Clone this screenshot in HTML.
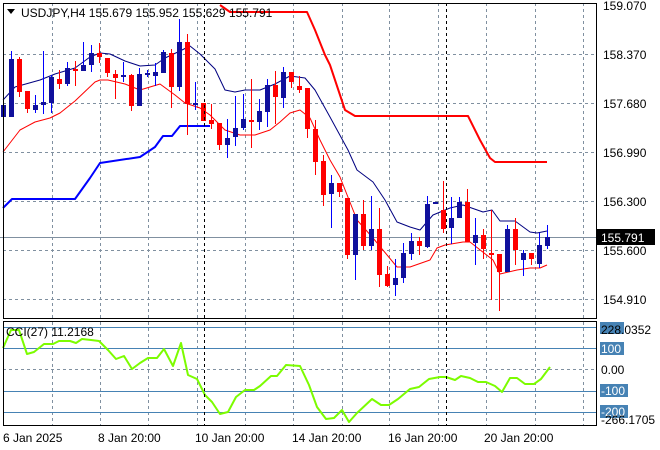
<!DOCTYPE html>
<html><head><meta charset="utf-8"><style>
html,body{margin:0;padding:0;background:#fff;width:660px;height:450px;overflow:hidden}
svg{display:block;font-family:"Liberation Sans",sans-serif}
</style></head><body>
<svg id="s" width="660" height="450" xmlns="http://www.w3.org/2000/svg">
<rect width="660" height="450" fill="#fff"/>
<g id="grid" stroke="#8090a0" stroke-dasharray="3,3" stroke-width="1"></g>
<line x1="0" y1="237.5" x2="597" y2="237.5" stroke="#8090a0"/>
<g id="ind"></g>
<g id="cand"></g>
<line x1="204.5" y1="3" x2="204.5" y2="318" stroke="#000" stroke-dasharray="3,3"/>
<line x1="446.5" y1="3" x2="446.5" y2="318" stroke="#000" stroke-dasharray="3,3"/>
<line x1="204.5" y1="322" x2="204.5" y2="426" stroke="#000" stroke-dasharray="3,3"/>
<line x1="446.5" y1="322" x2="446.5" y2="426" stroke="#000" stroke-dasharray="3,3"/>
<rect x="3.5" y="3.5" width="593" height="315" fill="none" stroke="#000"/>
<rect x="3.5" y="321.5" width="593" height="104" fill="none" stroke="#000"/>
<g font-size="12" fill="#000" id="lbl">
<path d="M7 9 L15 9 L11 14 Z" fill="#000"/>
<text x="21" y="17">USDJPY,H4  155.679 155.952 155.629 155.791</text>
<text x="603" y="10">159.070</text>
<text x="603" y="59">158.370</text>
<text x="603" y="108">157.680</text>
<text x="603" y="157">156.990</text>
<text x="603" y="206">156.300</text>
<text x="603" y="255">155.600</text>
<text x="603" y="304">154.910</text>
<rect x="597" y="229" width="58" height="16" fill="#000"/>
<text x="601" y="242" fill="#fff">155.791</text>
<text x="6" y="336">CCI(27) 11.2168</text>
<rect x="600" y="322" width="24" height="12" fill="#4682b4"/>
<rect x="600" y="342" width="24" height="13" fill="#4682b4"/>
<text x="601" y="353" fill="#fff">100</text>
<text x="601" y="374">0.00</text>
<rect x="600" y="384" width="28" height="13" fill="#4682b4"/>
<text x="601" y="395" fill="#fff">-100</text>
<rect x="600" y="405" width="28" height="13" fill="#4682b4"/>
<text x="601" y="416" fill="#fff">-200</text>
<text x="601" y="334">228.0352</text>
<text x="601" y="424">-266.1705</text>
<text x="3" y="442">6 Jan 2025</text>
<text x="98" y="442">8 Jan 20:00</text>
<text x="195" y="442">10 Jan 20:00</text>
<text x="292" y="442">14 Jan 20:00</text>
<text x="388" y="442">16 Jan 20:00</text>
<text x="484" y="442">20 Jan 20:00</text>
</g>
</svg>
<script>
var NS="http://www.w3.org/2000/svg";
function el(p,t,a){var e=document.createElementNS(NS,t);for(var k in a)e.setAttribute(k,a[k]);document.getElementById(p).appendChild(e);return e;}
// grid
var gx=[52,100,148,197,245,293,342,389,438,486,535,583];
gx.forEach(function(x){el('grid','line',{x1:x+.5,y1:3,x2:x+.5,y2:318});el('grid','line',{x1:x+.5,y1:322,x2:x+.5,y2:426});});
[54,103,152,201,250,299].forEach(function(y){el('grid','line',{x1:3,y1:y+.5,x2:597,y2:y+.5});});
el('grid','line',{x1:3,y1:369.5,x2:597,y2:369.5});
[327,348,391,412].forEach(function(y){el('ind','line',{x1:3,y1:y+.5,x2:597,y2:y+.5,stroke:'#4682b4'});});
function pl(pts,c,w){el('ind','polyline',{points:pts,fill:'none',stroke:c,'stroke-width':w,'stroke-linejoin':'round'});}
pl("3,100 15,87 40,80 55,74 75,68 90,57 100,53 110,54 125,61 140,66 155,65 165,58 180,51 190,46 200,54 215,69 225,90 235,92 245,90 260,90 275,84 290,76 305,78 315,90 330,117 348,150 357,170 373,182 385,200 397,222 410,227 420,230 433,215 450,208 463,205 483,212 492,210 500,221 515,221 530,232 537,233 547,231","#000080",1);
pl("3,152 20,130 35,122 50,118 60,113 75,101 95,82 100,80 108,80 125,84 140,90 160,84 175,95 185,103 200,108 210,115 225,130 240,135 255,135 270,130 280,122 290,113 300,110 310,118 320,140 330,160 340,177 357,220 373,238 397,267 410,267 430,260 437,248 445,245 463,242 470,242 493,260 500,274 517,270 530,268 540,268 547,265","#ff0000",1);
pl("3,208 12,199 75,199 90,178 100,163 140,157 155,147 163,136 172,136 180,126 210,126","#0000ff",2);
pl("220,5 230,12 307,12 315,30 325,55 330,65 345,110 355,116 468,116 480,140 490,158 495,162 547,162","#ff0000",2);
pl("3,348 11,330 19,330 27,354 34,352 44,344 53,344 59,341 70,341 76,343 82,339 91,340 99,341 108,350 116,359 124,356 132,369 140,363 148,358 157,358 164,349 173,366 181,343 188,375 197,379 205,395 212,402 220,414 228,412 236,397 245,390 254,390 260,386 271,376 277,376 286,365 300,366 309,385 317,407 326,419 334,418 342,410 349,422 357,413 372,399 381,405 389,405 398,399 410,389 419,387 429,379 440,377 446,377 455,380 461,376 470,378 478,382 486,382 495,386 502,392 510,378 517,378 525,384 534,384 541,379 550,367","#7cfc00",2);
var C=[
['b',105,117,100,122],['b',59,117,51,117],['r',59,92,57,97],['r',91,109,91,113],['b',105,110,95,113],
['b',102,105,51,114],['b',77,103,75,113],['r',79,84,70,89],['b',68,84,62,86],['r',69,71,61,86],
['b',65,71,42,71],['b',53,65,45,72],['r',53,57,43,63],['r',58,73,58,77],['r',74,78,70,99],
['b',75,77,62,82],['r',75,106,74,111],['b',74,106,68,106],['b',73,74,70,77],['b',72,76,63,86],
['b',52,73,50,73],['r',53,87,49,108],['b',42,87,19,91],['r',42,104,34,135],['b',103,105,82,110],
['r',103,121,103,121],['r',120,124,104,129],['r',123,145,123,150],['b',138,145,119,158],['b',128,137,96,146],
['b',119,128,94,130],['r',120,121,79,148],['b',111,122,99,130],['b',85,112,79,127],['r',85,97,71,124],
['b',72,98,67,108],['r',72,82,72,88],['r',86,90,76,93],['r',88,129,88,138],['r',129,162,120,175],
['r',161,195,155,206],['b',183,194,175,228],['r',183,192,183,197],['r',198,255,198,259],['b',214,255,214,280],
['r',214,246,200,250],['b',229,246,196,250],['r',229,275,208,287],['r',274,286,266,287],['b',278,285,259,296],
['b',253,278,243,283],['b',241,254,233,260],['r',241,246,237,255],['b',204,247,196,248],['b',202,204,202,204],
['r',210,229,181,233],['b',218,228,197,244],['b',202,218,197,218],['r',202,242,189,242],['b',235,243,218,265],
['r',235,249,229,259],['r',253,255,210,300],['r',254,272,254,311],['b',229,272,225,272],['r',229,250,218,265],
['b',253,260,250,276],['r',253,259,253,265],['b',245,264,233,268],['b',237,246,225,249]];
C.forEach(function(c,i){var x=Math.round(3.3+8*i);var wc=c[0]=='b'?'#0000ff':'#ff0000';var bc=c[0]=='b'?'#10109c':'#ff0000';
el('cand','rect',{x:x,y:c[3],width:1,height:Math.max(1,c[4]-c[3]),fill:wc});
var h=Math.max(2,c[2]-c[1]);el('cand','rect',{x:x-2,y:c[1],width:5,height:h,fill:bc});});
</script>
</body></html>
